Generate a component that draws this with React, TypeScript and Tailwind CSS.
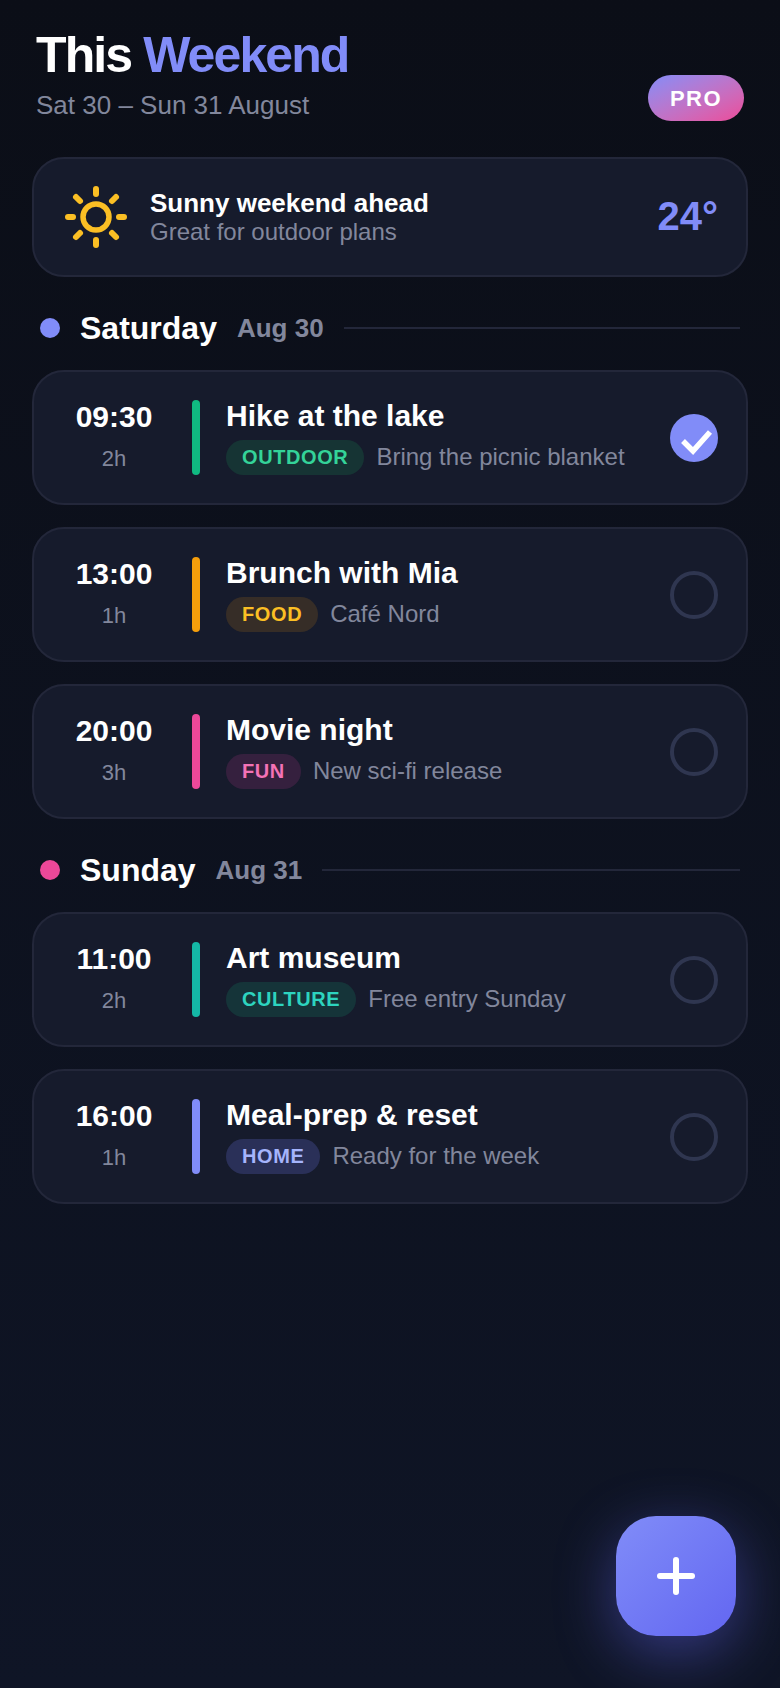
import React from 'react'

type EventType = {
  time: string,
  duration: string,
  title: string,
  tag: string,
  note: string,
  barClass: string,
  tagClass: string,
  done?: boolean
}

const saturday: EventType[] = [
  { time: '09:30', duration: '2h', title: 'Hike at the lake', tag: 'OUTDOOR', note: 'Bring the picnic blanket', barClass: 'bg-[#10b981]', tagClass: 'bg-[#163434] text-[#34d399]', done: true },
  { time: '13:00', duration: '1h', title: 'Brunch with Mia', tag: 'FOOD', note: 'Café Nord', barClass: 'bg-[#f59e0b]', tagClass: 'bg-[#362d27] text-[#fbbf24]' },
  { time: '20:00', duration: '3h', title: 'Movie night', tag: 'FUN', note: 'New sci-fi release', barClass: 'bg-[#ec4899]', tagClass: 'bg-[#35203e] text-[#f472b6]' },
]

const sunday: EventType[] = [
  { time: '11:00', duration: '2h', title: 'Art museum', tag: 'CULTURE', note: 'Free entry Sunday', barClass: 'bg-[#14b8a6]', tagClass: 'bg-[#153439] text-[#2dd4bf]' },
  { time: '16:00', duration: '1h', title: 'Meal-prep & reset', tag: 'HOME', note: 'Ready for the week', barClass: 'bg-[#818cf8]', tagClass: 'bg-[#2a3058] text-[#a5b4fc]' },
]

function SunIcon() {
  return (
    <svg width="64" height="64" viewBox="0 0 64 64" fill="none" stroke="#fbbf24" strokeLinecap="round" className="shrink-0">
      <circle cx="32" cy="32" r="13" strokeWidth="5.5" />
      <g strokeWidth="6">
        <path d="M32 4V9" />
        <path d="M32 55V60" />
        <path d="M4 32H9" />
        <path d="M55 32H60" />
        <path d="M12 12L16 16" />
        <path d="M48 48L52 52" />
        <path d="M52 12L48 16" />
        <path d="M16 48L12 52" />
      </g>
    </svg>
  )
}

function EventCard({ event }: { event: EventType }) {
  return (
    <div className="h-[135px] rounded-[32px] border-2 border-[#23273a] bg-[#161b2c] flex items-center pl-[30px] pr-[28px]">
      <div className="w-[100px] shrink-0 flex flex-col items-center -mt-[4px]">
        <span className="text-[30px] leading-[38px] font-bold text-white">{event.time}</span>
        <span className="text-[22px] leading-[28px] mt-[9px] text-[#82879c]">{event.duration}</span>
      </div>
      <div className={`w-2 h-[75px] ml-[28px] rounded-full shrink-0 ${event.barClass}`}></div>
      <div className="ml-[26px] flex-1 min-w-0 -mt-[3px]">
        <div className="text-[30px] leading-[36px] font-bold text-white mb-[6px]">{event.title}</div>
        <div className="flex items-center">
          <span className={`h-[35px] rounded-full px-4 flex items-center text-[20px] font-bold tracking-[0.6px] ${event.tagClass}`}>{event.tag}</span>
          <span className="ml-3 -mt-[2px] text-[24px] leading-[35px] text-[#82879c]">{event.note}</span>
        </div>
      </div>
      {event.done ? (
        <svg width="48" height="48" viewBox="0 0 48 48" className="shrink-0">
          <circle cx="24" cy="24" r="24" fill="#818cf8" />
          <path d="M13 27L23 37L40 18" fill="none" stroke="#fff" strokeWidth="5.5" />
        </svg>
      ) : (
        <div className="w-12 h-12 rounded-full border-4 border-[#2f3650] shrink-0"></div>
      )}
    </div>
  )
}

function DayHeader({ name, date, dotClass }: { name: string, date: string, dotClass: string }) {
  return (
    <div className="flex items-center h-[40px] pl-2 pr-2">
      <div className={`w-5 h-5 rounded-full shrink-0 ${dotClass}`}></div>
      <span className="ml-5 text-[32px] font-bold text-white leading-[40px]">{name}</span>
      <span className="ml-5 text-[26px] font-bold text-[#82879c] leading-[40px]">{date}</span>
      <div className="ml-5 flex-1 h-0.5 bg-[#23273a]"></div>
    </div>
  )
}

export default function App() {
  return (
    <div className="relative h-[1688px] overflow-hidden bg-gradient-to-b from-[#0b0e17] to-[#0f1526] font-['Liberation_Sans',sans-serif]">
      <div className="px-8 pt-[25px]">
        <div className="flex justify-between items-end pl-1 pr-1">
          <div>
            <h1 className="text-[50px] leading-[60px] font-bold tracking-[-1.9px] text-white">This <span className="text-[#818cf8]">Weekend</span></h1>
            <p className="mt-1 text-[26px] leading-[32px] text-[#82879c]">Sat 30 – Sun 31 August</p>
          </div>
          <div className="h-[46px] w-[96px] rounded-full bg-gradient-to-br from-[#818cf8] to-[#ec4899] flex items-center justify-center text-[22px] font-bold tracking-[1.5px] text-white">PRO</div>
        </div>

        <div className="mt-[36px] h-[120px] rounded-[32px] border-2 border-[#23273a] bg-[#161b2c] flex items-center pl-[30px] pr-[28px]">
          <SunIcon />
          <div className="ml-[22px] flex-1">
            <div className="text-[26px] leading-[30px] font-bold text-white">Sunny weekend ahead</div>
            <div className="text-[24px] leading-[28px] text-[#82879c]">Great for outdoor plans</div>
          </div>
          <span className="-mt-[2px] text-[40px] font-bold text-[#818cf8]">24°</span>
        </div>

        <div className="mt-[31px]">
          <DayHeader name="Saturday" date="Aug 30" dotClass="bg-[#818cf8]" />
        </div>
        <div className="mt-[22px] flex flex-col gap-[22px]">
          {saturday.map((item) => <EventCard key={item.time} event={item} />)}
        </div>

        <div className="mt-[31px]">
          <DayHeader name="Sunday" date="Aug 31" dotClass="bg-[#ec4899]" />
        </div>
        <div className="mt-[22px] flex flex-col gap-[22px]">
          {sunday.map((item) => <EventCard key={item.time} event={item} />)}
        </div>
      </div>

      <button className="absolute left-[616px] top-[1516px] w-[120px] h-[120px] rounded-[40px] bg-gradient-to-br from-[#818cf8] to-[#6366f1] shadow-[0_16px_60px_rgba(99,102,241,0.45)] flex items-center justify-center">
        <svg width="40" height="40" viewBox="0 0 40 40" fill="none" stroke="#fff" strokeWidth="6" strokeLinecap="round">
          <path d="M20 4V36" />
          <path d="M4 20H36" />
        </svg>
      </button>
    </div>
  )
}
